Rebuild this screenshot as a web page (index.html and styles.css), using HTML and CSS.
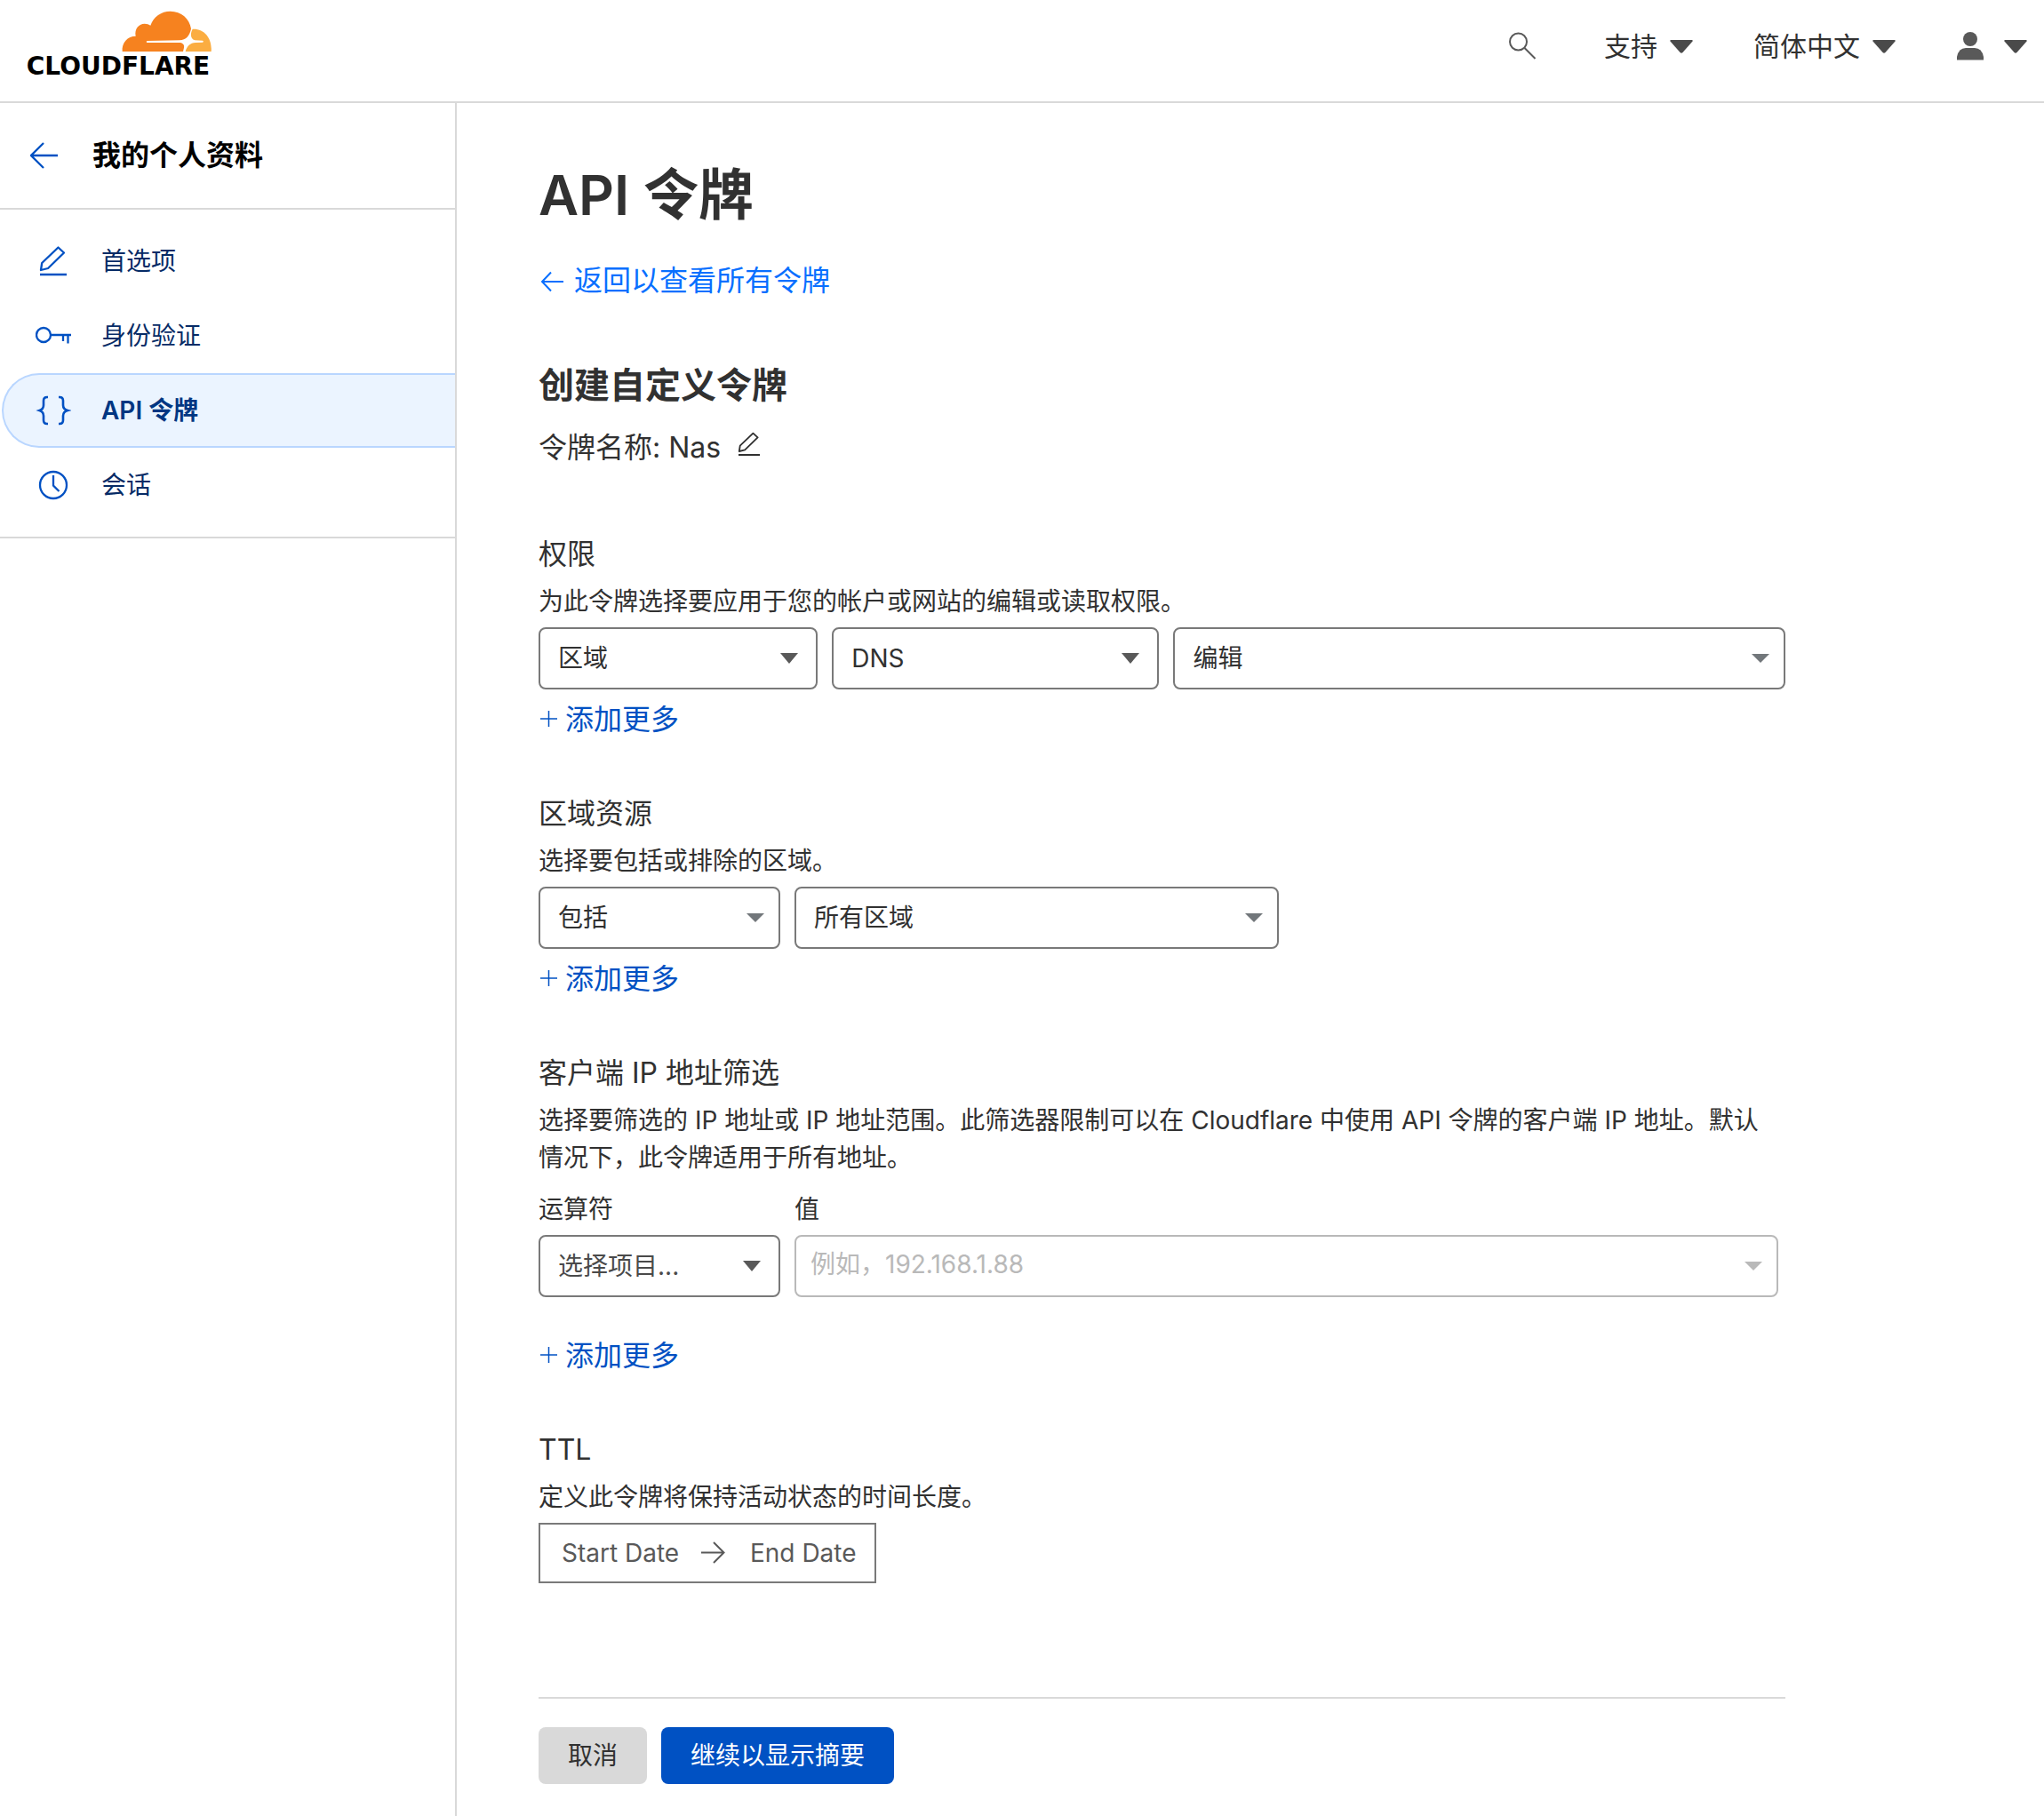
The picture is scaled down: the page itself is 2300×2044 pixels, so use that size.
FILE: index.html
```html
<!DOCTYPE html>
<html lang="zh-CN">
<head>
<meta charset="utf-8">
<meta name="viewport" content="width=device-width, initial-scale=1">
<title>API 令牌 | Cloudflare</title>
<link rel="stylesheet" href="styles.css">
</head>
<body>
<svg class="sprite" aria-hidden="true">
  <symbol id="i-caret" viewBox="0 0 20 12"><path d="M0 0H20L10 12Z" fill="currentColor"/></symbol>
  <symbol id="i-pencil" viewBox="0 0 40 40"><path d="M25.5 4.5L32 10.500L14 28L6 30L7.200 22ZM5 35H35" fill="none" stroke="currentColor" stroke-width="2.300" stroke-linejoin="round"/></symbol>
  <symbol id="i-plus" viewBox="0 0 22 22"><path d="M2 10H21M11.500 1V19" fill="none" stroke="currentColor" stroke-width="1.500"/></symbol>
</svg>

<header class="topbar">
  <a class="logo" href="#" aria-label="Cloudflare">
    <svg class="logo-cloud" viewBox="408 36 306 138" aria-hidden="true">
      <path fill="#f6821f" d="M413 174C410 144 431 122 458 122C453 96 470 80 488 80C496 80 503 82 508 86C518 56 545 38 575 38C612 38 640 63 645 97C641 120 628 136 606 136L496 138Q492 141 496 144L608 144C619 146 623 153 621 161L618 174Z"/>
      <path fill="#fbad41" d="M650 98C692 96 717 132 713 174H626C631 156 642 145 660 144L684 143Q689 140 684 137L658 136C645 133 642 119 647 105Z"/>
    </svg>
    <span class="logo-word">CLOUDFLARE</span>
  </a>
  <nav class="topnav" aria-label="工具">
    <button class="topnav-item" type="button" aria-label="搜索">
      <svg class="icon-lg" viewBox="0 0 40 40" fill="none" stroke="currentColor" stroke-width="2" aria-hidden="true"><circle cx="11.500" cy="15" r="9.500"/><path d="M18.500 22L30.500 34"/></svg>
    </button>
    <button class="topnav-item" type="button">支持 <svg class="caret-lg" aria-hidden="true" viewBox="0 0 26 15"><path d="M1 0H25Q26 0 25.500 1.500L14.500 14Q13 15.500 11.500 14L.5 1.500Q0 0 1 0Z" fill="currentColor"/></svg></button>
    <button class="topnav-item" type="button">简体中文 <svg class="caret-lg" aria-hidden="true" viewBox="0 0 26 15"><path d="M1 0H25Q26 0 25.500 1.500L14.500 14Q13 15.500 11.500 14L.5 1.500Q0 0 1 0Z" fill="currentColor"/></svg></button>
    <button class="topnav-item topnav-user" type="button" aria-label="帐户">
      <svg class="icon-user" viewBox="0 0 32 32" aria-hidden="true"><ellipse cx="16" cy="8" rx="8" ry="8" fill="#595959"/><path d="M1 31.500V28Q3 18 11 18H21Q29 18 31 28V31.500Z" fill="#595959"/></svg>
      <svg class="caret-lg" aria-hidden="true" viewBox="0 0 26 15"><path d="M1 0H25Q26 0 25.500 1.500L14.500 14Q13 15.500 11.500 14L.5 1.500Q0 0 1 0Z" fill="currentColor"/></svg>
    </button>
  </nav>
</header>

<div class="layout">
  <aside class="sidebar">
    <div class="sidebar-head">
      <a class="sidebar-back" href="#" aria-label="返回"><svg class="icon-md" viewBox="0 0 32 32" fill="none" stroke="currentColor" stroke-width="2.300" aria-hidden="true"><path d="M31 16H1M15 2L1 16L15 30"/></svg></a>
      <span>我的个人资料</span>
    </div>
    <nav class="sidebar-nav" aria-label="我的个人资料">
      <a class="nav-link" href="#"><svg class="icon-lg" aria-hidden="true"><use href="#i-pencil"/></svg>首选项</a>
      <a class="nav-link" href="#"><svg class="icon-lg" viewBox="0 0 40 40" fill="none" stroke="currentColor" stroke-width="2.300" aria-hidden="true"><circle cx="9" cy="19" r="8"/><path d="M17 19H40M31 19V26M36.500 19V28.500"/></svg>身份验证</a>
      <a class="nav-link nav-link-active" href="#" aria-current="page"><svg class="icon-lg" viewBox="0 0 40 40" fill="none" stroke="currentColor" stroke-width="2.600" aria-hidden="true"><path d="M14 5H13Q9 5 9 9V14Q9 18.500 4.500 20Q9 21.500 9 26V31Q9 35 13 35H14M26 5H27Q31 5 31 9V14Q31 18.500 36 20Q31 21.500 31 26V31Q31 35 27 35H26"/></svg>API 令牌</a>
      <a class="nav-link" href="#"><svg class="icon-lg" viewBox="0 0 40 40" fill="none" stroke="currentColor" stroke-width="2.300" aria-hidden="true"><circle cx="20" cy="20" r="15"/><path d="M20 9V20.500L26.500 27"/></svg>会话</a>
    </nav>
  </aside>

  <main class="main">
    <div class="content">
      <h1 class="page-title">API 令牌</h1>
      <a class="back-link" href="#"><svg class="icon-back" viewBox="0 0 30 30" fill="none" stroke="currentColor" stroke-width="2" aria-hidden="true"><path d="M28 16H4M14 5.500L4 16L14 26.500"/></svg>返回以查看所有令牌</a>

      <h2 class="form-title">创建自定义令牌</h2>
      <div class="token-name">
        <span>令牌名称: Nas</span>
        <button class="edit-button" type="button" aria-label="编辑令牌名称"><svg class="icon-md" aria-hidden="true"><use href="#i-pencil"/></svg></button>
      </div>

      <form class="form">
        <section class="section">
          <h3 class="section-title">权限</h3>
          <p class="section-text">为此令牌选择要应用于您的帐户或网站的编辑或读取权限。</p>
          <div class="row row-permissions">
            <div class="field"><select class="control" aria-label="权限类别"><option>区域</option></select><svg class="caret" aria-hidden="true"><use href="#i-caret"/></svg></div>
            <div class="field"><select class="control" aria-label="权限项目"><option>DNS</option></select><svg class="caret" aria-hidden="true"><use href="#i-caret"/></svg></div>
            <div class="field field-combo"><select class="control" aria-label="访问级别"><option>编辑</option></select><svg class="caret" viewBox="0 0 20 10" aria-hidden="true"><path d="M0 0H20L10 10Z" fill="currentColor"/></svg></div>
          </div>
          <button class="add-more" type="button"><svg class="icon-plus" aria-hidden="true"><use href="#i-plus"/></svg>添加更多</button>
        </section>

        <section class="section">
          <h3 class="section-title">区域资源</h3>
          <p class="section-text">选择要包括或排除的区域。</p>
          <div class="row row-resources">
            <div class="field field-combo"><select class="control" aria-label="包括或排除"><option>包括</option></select><svg class="caret" viewBox="0 0 20 10" aria-hidden="true"><path d="M0 0H20L10 10Z" fill="currentColor"/></svg></div>
            <div class="field field-combo"><select class="control" aria-label="区域"><option>所有区域</option></select><svg class="caret" viewBox="0 0 20 10" aria-hidden="true"><path d="M0 0H20L10 10Z" fill="currentColor"/></svg></div>
          </div>
          <button class="add-more" type="button"><svg class="icon-plus" aria-hidden="true"><use href="#i-plus"/></svg>添加更多</button>
        </section>

        <section class="section">
          <h3 class="section-title">客户端 IP 地址筛选</h3>
          <p class="section-text">选择要筛选的 IP 地址或 IP 地址范围。此筛选器限制可以在 Cloudflare 中使用 API 令牌的客户端 IP 地址。默认情况下，此令牌适用于所有地址。</p>
          <div class="row row-filter">
            <div class="labelled">
              <label class="label" for="operator">运算符</label>
              <div class="field"><select class="control control-empty" id="operator"><option>选择项目...</option></select><svg class="caret" aria-hidden="true"><use href="#i-caret"/></svg></div>
            </div>
            <div class="labelled">
              <label class="label" for="value">值</label>
              <div class="field field-combo field-disabled"><input class="control" id="value" type="text" placeholder="例如，192.168.1.88" disabled><svg class="caret" viewBox="0 0 20 10" aria-hidden="true"><path d="M0 0H20L10 10Z" fill="currentColor"/></svg></div>
            </div>
          </div>
          <button class="add-more add-more-spaced" type="button"><svg class="icon-plus" aria-hidden="true"><use href="#i-plus"/></svg>添加更多</button>
        </section>

        <section class="section">
          <h3 class="section-title">TTL</h3>
          <p class="section-text">定义此令牌将保持活动状态的时间长度。</p>
          <div class="date-range">
            <input class="date-input date-start" type="text" placeholder="Start Date" aria-label="Start Date">
            <svg class="icon-md" viewBox="0 0 32 32" fill="none" stroke="currentColor" stroke-width="2" aria-hidden="true"><path d="M1 15.500H26M15 4L26.500 15.500L15 27"/></svg>
            <input class="date-input date-end" type="text" placeholder="End Date" aria-label="End Date">
          </div>
        </section>

        <div class="actions">
          <button class="button button-secondary" type="button">取消</button>
          <button class="button button-primary" type="submit">继续以显示摘要</button>
        </div>
      </form>
    </div>
  </main>
</div>
</body>
</html>
```
FILE: styles.css
```css
:root {
  --text: #313131;
  --line: #d9d9d9;
  --control: #797979;
  --blue: #0051c3;
  --navy: #003682;
}

* { box-sizing: border-box; }

body {
  margin: 0;
  min-height: 100vh;
  display: flex;
  flex-direction: column;
  background: #fff;
  color: var(--text);
  font-family: Inter, "Noto Sans CJK SC", sans-serif;
  font-size: 28px;
  line-height: 42px;
}

h1, h2, h3, p { margin: 0; }
a { text-decoration: none; }
button, input, select { font: inherit; color: inherit; }
button { padding: 0; border: 0; background: none; cursor: pointer; }
svg { display: block; flex: none; }

.sprite { position: absolute; width: 0; height: 0; }
.icon-lg { width: 40px; height: 40px; }
.icon-md { width: 32px; height: 32px; }
.icon-back { width: 30px; height: 30px; }
.icon-plus { width: 22px; height: 22px; }
.icon-user { width: 32px; height: 32px; }
.caret-lg { width: 26px; height: 15px; color: #4a4a4a; }

/* Top bar */
.topbar {
  display: flex;
  justify-content: space-between;
  align-items: flex-start;
  padding: 12px 19px 22px 28px;
  border-bottom: 2px solid var(--line);
}
.logo { display: flex; flex-direction: column; align-items: center; width: 210px; color: #000; }
.logo-cloud { align-self: flex-end; width: 102px; height: 46px; }
.logo-word {
  font-family: "DejaVu Sans", sans-serif;
  font-size: 28px;
  font-weight: 700;
  line-height: 34px;
}
.topnav { display: flex; gap: 68px; }
.topnav-item {
  display: flex;
  align-items: center;
  gap: 14px;
  height: 80px;
  font-size: 30px;
}
.topnav-item .icon-lg { color: #595959; }
.topnav-user { gap: 22px; }

/* Sidebar */
.layout { display: flex; flex: 1; }
.sidebar { flex: none; width: 514px; border-right: 2px solid var(--line); }
.sidebar-head {
  display: flex;
  align-items: center;
  gap: 38px;
  height: 120px;
  padding-left: 34px;
  border-bottom: 2px solid var(--line);
  color: #000;
  font-size: 32px;
  font-weight: 600;
}
.sidebar-back { color: var(--blue); }
.sidebar-nav { padding: 16px 0; border-bottom: 2px solid var(--line); }
.nav-link {
  display: flex;
  align-items: center;
  gap: 34px;
  height: 84px;
  margin-left: 2px;
  padding-left: 36px;
  border: 2px solid transparent;
  border-right: 0;
  border-radius: 42px 0 0 42px;
  color: #062b66;
}
.nav-link svg { color: var(--blue); }
.nav-link-active { background: #ebf4ff; border-color: #b9d6ff; color: var(--navy); font-weight: 600; }

/* Content */
.main { flex: 1; min-width: 0; padding: 64px 92px 32px; }
.content { max-width: 1403px; }
.page-title { font-size: 62px; line-height: 80px; font-weight: 600; }
.back-link {
  display: flex;
  align-items: center;
  gap: 10px;
  width: fit-content;
  margin-top: 32px;
  color: #086fff;
  font-size: 32px;
  line-height: 48px;
}
.form-title { margin-top: 64px; font-size: 40px; line-height: 60px; font-weight: 600; }
.token-name {
  display: flex;
  align-items: flex-start;
  gap: 16px;
  margin-top: 16px;
  font-size: 32px;
  line-height: 48px;
}
.edit-button { padding: 4px 0; }

.form { margin-top: 72px; }
.section + .section { margin-top: 58px; }
.section-title { font-size: 32px; line-height: 48px; font-weight: 400; }
.section-text { margin-top: 8px; padding-right: 20px; }

.row { display: grid; gap: 16px; margin-top: 8px; }
.row-permissions { grid-template-columns: 314fr 368fr 688fr; }
.row-resources { grid-template-columns: 272px minmax(0, 545px); }
.row-filter { grid-template-columns: 272px 1fr; margin-top: 16px; padding-right: 8px; }
.labelled { display: flex; flex-direction: column; gap: 8px; }

.field { display: grid; align-items: center; color: #595959; }
.field > * { grid-area: 1 / 1; }
.control {
  appearance: none;
  width: 100%;
  height: 70px;
  padding: 0 48px 0 20px;
  border: 2px solid var(--control);
  border-radius: 8px;
  background: #fff;
  color: var(--text);
}
.control-empty { color: #4a4a4a; }
.caret {
  justify-self: end;
  width: 20px;
  height: 12px;
  margin-right: 22px;
  pointer-events: none;
}
.field-combo { color: #72777b; }
.field-combo .caret { height: 10px; margin-right: 18px; }
.field-disabled { color: #b9b9b9; }
.field-disabled .control { padding-left: 16px; padding-bottom: 4px; border-color: #b9b9b9; }
.control::placeholder { color: #b9b9b9; opacity: 1; }

.add-more {
  display: flex;
  align-items: center;
  gap: 8px;
  margin-top: 10px;
  color: var(--blue);
  font-size: 32px;
  line-height: 48px;
}
.add-more-spaced { margin-top: 42px; }

.date-range {
  display: flex;
  align-items: center;
  gap: 24px;
  width: fit-content;
  height: 68px;
  margin-top: 8px;
  padding: 0 20px 0 24px;
  border: 2px solid var(--control);
  color: #595959;
}
.date-input { padding: 0; border: 0; background: none; }
.date-input::placeholder { color: #595959; opacity: 1; }
.date-start { width: 132px; }
.date-end { width: 120px; }

.actions {
  display: flex;
  gap: 16px;
  margin-top: 128px;
  padding-top: 32px;
  border-top: 2px solid var(--line);
}
.button { height: 64px; padding: 0 33px; border-radius: 8px; }
.button-secondary { background: var(--line); }
.button-primary { background: var(--blue); color: #fff; }
```
